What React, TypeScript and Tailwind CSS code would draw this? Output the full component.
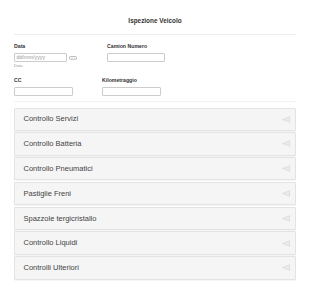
import React from 'react';

const sections = [
  'Controllo Servizi',
  'Controllo Batteria',
  'Controllo Pneumatici',
  'Pastiglie Freni',
  'Spazzole tergicristallo',
  'Controllo Liquidi',
  'Controlli Ulteriori',
];

function Caret() {
  return (
    <svg width="8" height="7" viewBox="0 0 8 7" className="shrink-0">
      <path d="M7.5 0.8 L7.5 6.2 L0.8 3.5 Z" fill="#ececec" stroke="#d2d2d2" strokeWidth="0.6" strokeLinejoin="round" />
    </svg>
  );
}

export default function App() {
  return (
    <div className="w-[310px] h-[282px] bg-white px-[14px] overflow-hidden text-[#333] antialiased opacity-[0.999]" style={{ fontFamily: '"Liberation Sans", Arial, sans-serif' }}>
      <h1 className="pt-[16px] h-[35px] text-center text-[6.4px] font-bold leading-[9px] border-b border-[#eee]">
        Ispezione Veicolo
      </h1>

      <div className="flex pt-[8px]">
        <div className="w-[93px]">
          <label className="block text-[5.2px] font-bold leading-[6px] mb-[4px]">Data</label>
          <div className="flex items-center">
            <div className="w-[53px] h-[9px] border border-[#ccc] rounded-[1px] flex items-center pl-[1.5px] text-[5.4px] text-[#999] leading-none">
              dd/mm/yyyy
            </div>
            <svg width="8" height="4" viewBox="0 0 8 4" className="ml-[1.5px]">
              <rect x="0.4" y="0.6" width="7.2" height="2.6" rx="1" fill="none" stroke="#999" strokeWidth="0.7" />
            </svg>
          </div>
          <div className="text-[4px] text-[#999] leading-[5px] mt-[0.5px]">Data</div>
        </div>
        <div>
          <label className="block text-[5.2px] font-bold leading-[6px] mb-[4px]">Camion Numero</label>
          <div className="w-[58px] h-[9px] border border-[#ccc] rounded-[1px]" />
        </div>
      </div>

      <div className="flex pt-[9px] pb-[5px] border-b border-[#f2f2f2]">
        <div className="w-[88px]">
          <label className="block text-[5.2px] font-bold leading-[6px] mb-[4px]">CC</label>
          <div className="w-[59px] h-[9px] border border-[#ccc] rounded-[1px]" />
        </div>
        <div>
          <label className="block text-[5.2px] font-bold leading-[6px] mb-[4px]">Kilometraggio</label>
          <div className="w-[59px] h-[9px] border border-[#ccc] rounded-[1px]" />
        </div>
      </div>

      <div className="flex flex-col gap-[1.5px] mt-[6px]">
        {sections.map((s) => (
          <div
            key={s}
            className="h-[23.3px] flex items-center justify-between pl-[8.5px] pr-[5px] bg-[#f5f5f5] border border-[#e3e3e3] rounded-[1px] shadow-[0_1px_0_rgba(0,0,0,0.04)]"
          >
            <span className="text-[7.5px] leading-none text-[#444]">{s}</span>
            <Caret />
          </div>
        ))}
      </div>
    </div>
  );
}
